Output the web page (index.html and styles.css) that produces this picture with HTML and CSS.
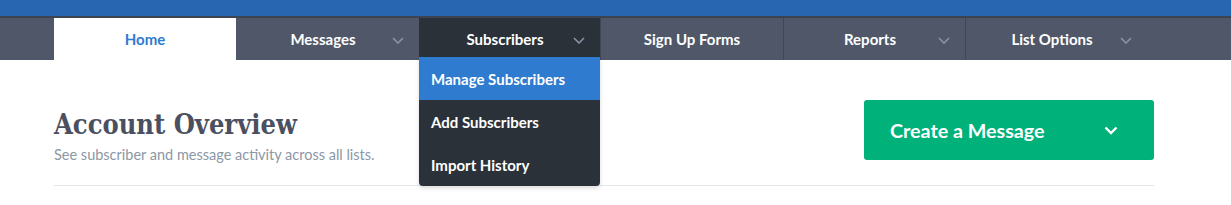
FILE: index.html
```html
<!DOCTYPE html>
<html lang="en">
<head>
<meta charset="utf-8">
<title>Account Overview</title>
<link rel="stylesheet" href="styles.css">
</head>
<body>
<header class="topbar"></header>
<nav class="nav">
  <ul class="nav-list">
    <li class="nav-item nav-home is-current"><span class="nav-label">Home</span></li>
    <li class="nav-item w183 has-caret"><span class="nav-label">Messages</span><svg class="caret" viewBox="0 0 12 7"><path d="M1 1l5 5 5-5"/></svg></li>
    <li class="nav-item w181 has-caret is-open"><span class="nav-label">Subscribers</span><svg class="caret" viewBox="0 0 12 7"><path d="M1 1l5 5 5-5"/></svg>
      <ul class="dropdown">
        <li class="dropdown-item is-active">Manage Subscribers</li>
        <li class="dropdown-item">Add Subscribers</li>
        <li class="dropdown-item">Import History</li>
      </ul>
    </li>
    <li class="nav-item w183 sep"><span class="nav-label">Sign Up Forms</span></li>
    <li class="nav-item has-caret sep"><span class="nav-label">Reports</span><svg class="caret" viewBox="0 0 12 7"><path d="M1 1l5 5 5-5"/></svg></li>
    <li class="nav-item has-caret sep"><span class="nav-label">List Options</span><svg class="caret" viewBox="0 0 12 7"><path d="M1 1l5 5 5-5"/></svg></li>
  </ul>
</nav>
<main class="page">
  <div class="page-head">
    <div class="titles">
      <h1 class="title">Account Overview</h1>
      <p class="subtitle">See subscriber and message activity across all lists.</p>
    </div>
    <button class="cta" type="button"><span>Create a Message</span><svg class="cta-caret" viewBox="0 0 14 9"><path d="M1.5 1.5l5.5 5.5 5.5-5.5"/></svg></button>
  </div>
</main>
</body>
</html>
```
FILE: styles.css
```css
* { box-sizing: border-box; }
html, body { margin: 0; padding: 0; }
body {
  background: #fff;
  font-family: Lato, "Open Sans", sans-serif;
  width: 1231px;
  height: 205px;
  overflow: hidden;
}
.topbar {
  height: 16px;
  background: #2866b2;
}
.nav {
  height: 44px;
  background: #4f5769;
  border-top: 2px solid #3c4351;
}
.nav-list {
  list-style: none;
  margin: 0;
  padding: 0 0 0 54px;
  display: flex;
  height: 42px;
}
.nav-item {
  position: relative;
  width: 182px;
  height: 42px;
  display: flex;
  align-items: center;
  justify-content: center;
  padding-bottom: 1px;
  color: #fff;
  font-weight: 700;
  font-size: 15px;
}
.nav-item.w183 { width: 183px; }
.nav-item.w181 { width: 181px; }
.nav-item.sep { border-left: 1px solid #3f4656; }
.nav-item.has-caret .nav-label { margin-right: 9px; }
.nav-item.is-current {
  background: #fff;
  color: #2f7bd0;
}
.nav-item.is-open { background: #2a3139; }
.caret {
  position: absolute;
  right: 15px;
  top: 19px;
  width: 12px;
  height: 7px;
  fill: none;
  stroke: #8893a3;
  stroke-width: 1.6;
}
.dropdown {
  position: absolute;
  top: 39px;
  left: 0;
  width: 181px;
  margin: 0;
  padding: 0;
  list-style: none;
  background: #2a3139;
  border-radius: 0 0 4px 4px;
  box-shadow: 0 2px 4px rgba(0, 0, 0, 0.15);
  z-index: 5;
  overflow: hidden;
}
.dropdown-item {
  height: 43px;
  display: flex;
  align-items: center;
  padding-left: 12px;
  font-size: 15px;
  font-weight: 700;
  color: #fff;
}
.dropdown-item.is-active { background: #2f7bd0; }
.page {
  margin-left: 54px;
  width: 1100px;
}
.page-head {
  display: flex;
  justify-content: space-between;
  align-items: flex-start;
  padding-top: 40px;
  height: 126px;
  border-bottom: 1px solid #e6e6e6;
}
.titles { padding-top: 8px; }
.title {
  margin: 0;
  font-family: "DejaVu Serif", "Liberation Serif", serif;
  font-stretch: condensed;
  font-weight: 700;
  font-size: 27px;
  line-height: 34px;
  color: #4a5061;
}
.subtitle {
  margin: 4px 0 0;
  font-size: 14.5px;
  line-height: 18px;
  color: #8b97a4;
}
.cta {
  width: 290px;
  height: 60px;
  background: #00b27a;
  border: 0;
  border-radius: 3px;
  color: #fff;
  font-family: Lato, "Open Sans", sans-serif;
  font-weight: 700;
  font-size: 19.7px;
  display: flex;
  align-items: center;
  justify-content: space-between;
  padding: 0 36px 0 26px;
}
.cta-caret {
  width: 14px;
  height: 9px;
  fill: none;
  stroke: #fff;
  stroke-width: 2.4;
}
```
